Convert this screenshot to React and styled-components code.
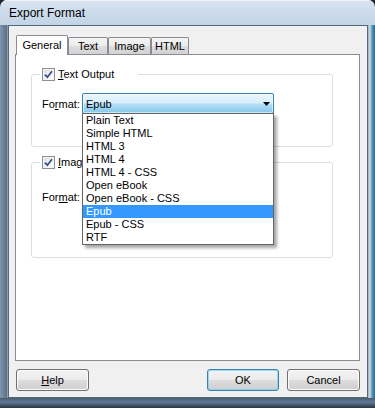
import styled, { createGlobalStyle } from "styled-components";

const font = `"Liberation Sans", Arial, sans-serif`;

const GlobalStyle = createGlobalStyle`
  html, body {
    margin: 0;
    padding: 0;
    background: #1d2630;
  }
  * {
    box-sizing: border-box;
  }
`;

const Window = styled.div`
  width: 375px;
  height: 408px;
  display: flex;
  flex-direction: column;
  font-family: ${font};
  font-size: 11px;
  color: #000;
  border-radius: 7px 7px 0 0;
  overflow: hidden;
`;

const TitleBar = styled.div`
  height: 25px;
  flex: none;
  display: flex;
  align-items: center;
  padding: 1px 0 0 9px;
  font-size: 12px;
  background: linear-gradient(
    180deg,
    #d9e5f1 0%,
    #cddcec 45%,
    #c2d4e6 100%
  );
  box-shadow: inset 0 1px 0 #eef4fa;
`;

const Frame = styled.div`
  flex: 1;
  display: flex;
  padding: 0 7px 10px 8px;
  background:
    linear-gradient(
      180deg,
      transparent calc(100% - 10px),
      #4a5b6d calc(100% - 10px),
      #5f7a96 calc(100% - 6px),
      #2b3641 100%
    ),
    linear-gradient(
      90deg,
      #8197ad 0px,
      #5a6e84 7px,
      #c0cbd6 8px,
      #c0cbd6 367px,
      #a3aeb9 368px,
      #d2dbe3 370px,
      #4a9bc2 372px,
      #2c6b8c 375px
    ),
    linear-gradient(180deg, #c2d4e6 0, #9fb2c6 100%);
`;

const Client = styled.div`
  flex: 1;
  display: flex;
  flex-direction: column;
  background: #f0f0f0;
  border: 1px solid #55677a;
  padding: 9px 7px 6px 6px;
`;

const TabStrip = styled.div`
  display: flex;
  align-items: flex-end;
  height: 19px;
  padding-left: 1px;
`;

const Tab = styled.div`
  position: relative;
  z-index: ${(p) => (p.$active ? 1 : 0)};
  width: ${(p) => p.$w}px;
  height: ${(p) => (p.$active ? 20 : 17)}px;
  margin-bottom: ${(p) => (p.$active ? -1 : 0)}px;
  display: flex;
  align-items: center;
  justify-content: center;
  padding-bottom: ${(p) => (p.$active ? 1 : 0)}px;
  border: 1px solid #898c95;
  border-bottom: none;
  border-radius: 2px 2px 0 0;
  background: ${(p) =>
    p.$active
      ? "#ffffff"
      : "linear-gradient(180deg, #f4f4f4 0%, #ececec 50%, #dedede 50%, #d2d2d2 100%)"};
`;

const Panel = styled.div`
  flex: 1;
  display: flex;
  flex-direction: column;
  gap: 8px;
  width: 345px;
  background: #fff;
  border: 1px solid #898c95;
  padding: 12px 0 0 15px;
`;

const Group = styled.fieldset`
  position: relative;
  z-index: ${(p) => (p.$open ? 2 : 1)};
  width: 302px;
  margin: 0;
  border: 1px solid #d5dfe5;
  border-radius: 3px;
  padding: ${(p) => p.$top}px 10px ${(p) => p.$bottom}px 10px;
`;

const Legend = styled.legend`
  display: flex;
  align-items: center;
  height: 14px;
  margin-left: -2px;
  padding: 0 24px 0 2px;
  background: #fff;
`;

const CheckBox = styled.span`
  width: 13px;
  height: 13px;
  margin-right: 3px;
  border: 1px solid #8e8f8f;
  background: linear-gradient(135deg, #dcdcdc 0%, #f4f4f4 60%, #ffffff 100%);
  box-shadow: inset 0 0 0 1px #f4f4f4;
  display: flex;
  align-items: center;
  justify-content: center;
`;

const FormatRow = styled.div`
  display: flex;
  align-items: center;
  height: 21px;
`;

const FieldLabel = styled.span`
  width: 40px;
  flex: none;
`;

const Combo = styled.div`
  position: relative;
  width: 192px;
  height: 21px;
  display: flex;
  align-items: center;
  justify-content: space-between;
  padding: 0 3px 0 3px;
  border: 1px solid #3c7fb1;
  border-radius: 2px;
  background: linear-gradient(
    180deg,
    #eaf6fd 0%,
    #d6eefb 48%,
    #b3dff7 52%,
    #86c7ea 100%
  );
  box-shadow: inset 0 0 0 1px rgba(255, 255, 255, 0.55);
`;

const DropList = styled.div`
  position: absolute;
  top: 100%;
  left: -1px;
  width: 192px;
  background: #fff;
  border: 1px solid #646464;
  box-shadow: 3px 3px 3px rgba(0, 0, 0, 0.35);
  z-index: 5;
`;

const Item = styled.div`
  height: 13px;
  line-height: 13px;
  padding-left: 3px;
  white-space: nowrap;
  color: ${(p) => (p.$selected ? "#fff" : "#000")};
  background: ${(p) => (p.$selected ? "#3399ff" : "transparent")};
`;

const ButtonRow = styled.div`
  display: flex;
  align-items: center;
  margin-top: 8px;
  padding-left: 1px;
  gap: 8px;
`;

const Spacer = styled.div`
  flex: 1;
`;

const Button = styled.div`
  width: ${(p) => p.$w}px;
  height: 22px;
  display: flex;
  align-items: center;
  justify-content: center;
  border: 1px solid ${(p) => (p.$default ? "#3c7fb1" : "#707070")};
  border-radius: 3px;
  background: linear-gradient(
    180deg,
    #f2f2f2 0%,
    #ebebeb 50%,
    #dddddd 50%,
    #cfcfcf 100%
  );
  box-shadow: inset 0 0 0 1px
    ${(p) => (p.$default ? "rgba(120, 210, 245, 0.75)" : "#fcfcfc")};
`;

const formats = [
  "Plain Text",
  "Simple HTML",
  "HTML 3",
  "HTML 4",
  "HTML 4 - CSS",
  "Open eBook",
  "Open eBook - CSS",
  "Epub",
  "Epub - CSS",
  "RTF",
];

function Check() {
  return (
    <CheckBox>
      <svg width="9" height="9" viewBox="0 0 9 9">
        <path
          d="M1 4.6 L3.4 7.2 L8 1.2"
          fill="none"
          stroke="#3a4f8f"
          strokeWidth="1.8"
        />
      </svg>
    </CheckBox>
  );
}

function Arrow() {
  return (
    <svg width="7" height="4" viewBox="0 0 7 4">
      <polygon points="0,0 7,0 3.5,4" fill="#000" />
    </svg>
  );
}

export default function App() {
  return (
    <>
      <GlobalStyle />
      <Window>
        <TitleBar>Export Format</TitleBar>
        <Frame>
          <Client>
            <TabStrip>
              <Tab $active $w={52}>General</Tab>
              <Tab $w={40}>Text</Tab>
              <Tab $w={43}>Image</Tab>
              <Tab $w={38}>HTML</Tab>
            </TabStrip>
            <Panel>
              <Group $open $top={12} $bottom={32}>
                <Legend>
                  <Check />
                  <span>
                    <u>T</u>ext Output
                  </span>
                </Legend>
                <FormatRow>
                  <FieldLabel>
                    Fo<u>r</u>mat:
                  </FieldLabel>
                  <Combo>
                    <span>Epub</span>
                    <Arrow />
                    <DropList>
                      {formats.map((f) => (
                        <Item key={f} $selected={f === "Epub"}>
                          {f}
                        </Item>
                      ))}
                    </DropList>
                  </Combo>
                </FormatRow>
              </Group>
              <Group $top={17} $bottom={50}>
                <Legend>
                  <Check />
                  <span>
                    <u>I</u>mage
                  </span>
                </Legend>
                <FormatRow>
                  <FieldLabel>
                    For<u>m</u>at:
                  </FieldLabel>
                </FormatRow>
              </Group>
            </Panel>
            <ButtonRow>
              <Button $w={73}>
                <span>
                  <u>H</u>elp
                </span>
              </Button>
              <Spacer />
              <Button $default $w={72}>
                OK
              </Button>
              <Button $w={73}>Cancel</Button>
            </ButtonRow>
          </Client>
        </Frame>
      </Window>
    </>
  );
}
